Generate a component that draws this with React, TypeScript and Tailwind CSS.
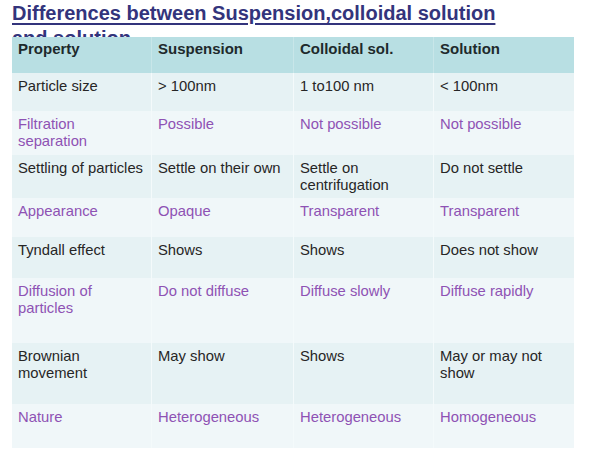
import React from "react";

type Row = { cells: string[][]; purple: boolean; h: string; bg: string };

const rows: Row[] = [
  { cells: [["Particle size"], ["> 100nm"], ["1 to100 nm"], ["< 100nm"]], purple: false, h: "h-[38px]", bg: "bg-[#e6f2f4]" },
  { cells: [["Filtration", "separation"], ["Possible"], ["Not possible"], ["Not possible"]], purple: true, h: "h-[44px]", bg: "bg-[#f0f7f9]" },
  { cells: [["Settling of particles"], ["Settle on their own"], ["Settle on", "centrifugation"], ["Do not settle"]], purple: false, h: "h-[43px]", bg: "bg-[#e6f2f4]" },
  { cells: [["Appearance"], ["Opaque"], ["Transparent"], ["Transparent"]], purple: true, h: "h-[39px]", bg: "bg-[#f0f7f9]" },
  { cells: [["Tyndall effect"], ["Shows"], ["Shows"], ["Does not show"]], purple: false, h: "h-[41px]", bg: "bg-[#e6f2f4]" },
  { cells: [["Diffusion of", "particles"], ["Do not diffuse"], ["Diffuse slowly"], ["Diffuse rapidly"]], purple: true, h: "h-[65px]", bg: "bg-[#f0f7f9]" },
  { cells: [["Brownian", "movement"], ["May show"], ["Shows"], ["May or may not", "show"]], purple: false, h: "h-[61px]", bg: "bg-[#e6f2f4]" },
  { cells: [["Nature"], ["Heterogeneous"], ["Heterogeneous"], ["Homogeneous"]], purple: true, h: "h-[44px]", bg: "bg-[#f0f7f9]" },
];

const cols = ["w-[139px]", "w-[142px]", "w-[140px]", "w-[141px]"];

export default function App() {
  return (
    <div className="w-[606px] h-[456px] bg-white overflow-hidden" style={{ fontFamily: '"Liberation Sans", Arial, sans-serif' }}>
      <div className="h-[37px] overflow-hidden pl-[12px]">
        <h1 className="text-[20px] leading-[25px] font-bold text-[#33347c] underline decoration-[1.5px] underline-offset-[3px] pt-[1px]">
          Differences between Suspension,colloidal solution
          <br />
          and solution
        </h1>
      </div>
      <div className="ml-[12px] w-[562px] flex flex-col">
        <div className="flex h-[36px] bg-[#b8dfe3]">
          {["Property", "Suspension", "Colloidal sol.", "Solution"].map((t, i) => (
            <div
              key={t}
              className={`${cols[i]} ${i > 0 ? "border-l border-[#c8e6e9]" : ""} pl-[6px] pt-[3px] text-[15px] leading-[18px] font-bold text-[#1e2a2c]`}
            >
              {t}
            </div>
          ))}
        </div>
        {rows.map((r, ri) => (
          <div key={ri} className={`flex ${r.h} ${r.bg}`}>
            {r.cells.map((c, ci) => (
              <div
                key={ci}
                className={`${cols[ci]} ${ci > 0 ? "border-l border-[#f4fafb]" : ""} pl-[6px] pt-[5px] text-[14.8px] leading-[17px] ${
                  r.purple ? "text-[#8e52b4]" : "text-[#262626]"
                }`}
              >
                {c.map((l, li) => (
                  <div key={li} className="whitespace-nowrap">{l}</div>
                ))}
              </div>
            ))}
          </div>
        ))}
      </div>
    </div>
  );
}
